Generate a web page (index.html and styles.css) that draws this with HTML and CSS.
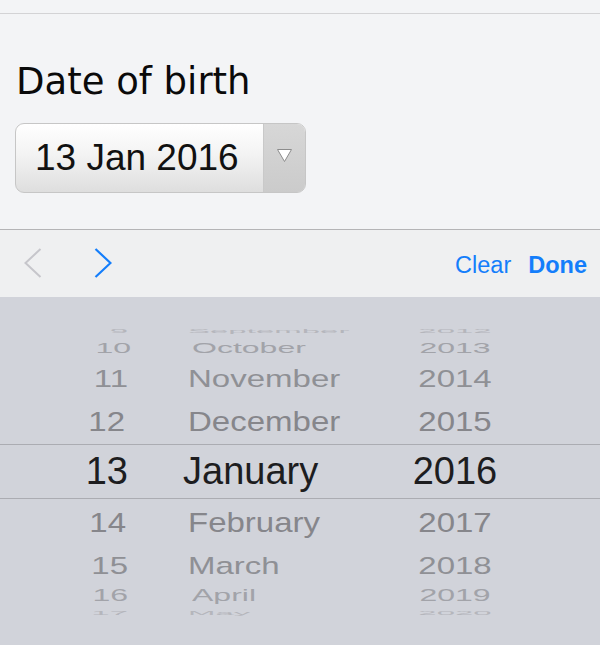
FILE: index.html
```html
<!DOCTYPE html>
<html>
<head>
<meta charset="utf-8">
<link rel="stylesheet" href="styles.css">
</head>
<body>
<div class="top">
  <div class="topstrip"></div>
  <div class="field">
    <div class="label">Date of birth</div>
    <div class="select">
      <div class="select-value">13 Jan 2016</div>
      <div class="select-arrow">
        <svg width="17" height="15" viewBox="0 0 17 15"><polygon points="1.5,1.5 15.5,1.5 8.5,13.5" fill="#ffffff" stroke="#8c8c8c" stroke-width="1"/></svg>
      </div>
    </div>
  </div>
</div>
<div class="toolbar">
  <svg class="chev" width="18" height="30" viewBox="0 0 18 30"><polyline points="16.5,1 1.5,15 16.5,29" fill="none" stroke="#c6c6cb" stroke-width="2"/></svg>
  <svg class="chev chev-next" width="18" height="30" viewBox="0 0 18 30"><polyline points="1.5,1 16.5,15 1.5,29" fill="none" stroke="#147efb" stroke-width="2.2"/></svg>
  <div class="spacer"></div>
  <span class="tb-btn">Clear</span>
  <span class="tb-btn tb-done">Done</span>
</div>
<div class="picker">
  <div class="row r4t"><span class="d">9</span><span class="m">September</span><span class="y">2012</span></div>
  <div class="row r3t"><span class="d">10</span><span class="m">October</span><span class="y">2013</span></div>
  <div class="row r2t"><span class="d">11</span><span class="m">November</span><span class="y">2014</span></div>
  <div class="row r1t"><span class="d">12</span><span class="m">December</span><span class="y">2015</span></div>
  <div class="row sel"><span class="d">13</span><span class="m">January</span><span class="y">2016</span></div>
  <div class="row r1b"><span class="d">14</span><span class="m">February</span><span class="y">2017</span></div>
  <div class="row r2b"><span class="d">15</span><span class="m">March</span><span class="y">2018</span></div>
  <div class="row r3b"><span class="d">16</span><span class="m">April</span><span class="y">2019</span></div>
  <div class="row r4b"><span class="d">17</span><span class="m">May</span><span class="y">2020</span></div>
</div>
</body>
</html>
```
FILE: styles.css
```css
html, body {
  margin: 0;
  padding: 0;
}
body {
  width: 600px;
  height: 645px;
  overflow: hidden;
  background: #d1d3da;
  font-family: "Liberation Sans", Arial, sans-serif;
}
.top {
  background: #f3f4f6;
  height: 229px;
}
.topstrip {
  height: 13px;
  border-bottom: 1px solid #d3d3d5;
}
.field {
  padding: 46px 0 0 16px;
}
.label {
  font-family: "DejaVu Sans", Verdana, sans-serif;
  font-size: 37px;
  line-height: 44px;
  color: #0a0a0a;
}
.select {
  margin-top: 19px;
  margin-left: -1px;
  width: 289px;
  height: 68px;
  border: 1px solid #c6c6c6;
  border-radius: 9px;
  display: flex;
  overflow: hidden;
  background: linear-gradient(#ffffff, #f3f3f3 45%, #dedede);
}
.select-value {
  flex: 1;
  display: flex;
  align-items: center;
  padding-left: 19px;
  font-size: 37px;
  color: #111;
}
.select-arrow {
  width: 42px;
  display: flex;
  align-items: center;
  justify-content: center;
  border-left: 1px solid #c9c9c9;
  background: linear-gradient(#d7d7d7, #cbcbcb);
  padding-bottom: 6px;
  box-sizing: border-box;
}
.toolbar {
  height: 67px;
  border-top: 1px solid #b4b4b6;
  background: #eff0f1;
  display: flex;
  align-items: center;
  padding: 0 13px 0 24px;
}
.chev {
  display: block;
  margin-top: -2px;
}
.chev-next {
  margin-left: 52px;
}
.spacer {
  flex: 1;
}
.tb-btn {
  font-size: 23.5px;
  color: #147efb;
  margin-top: 4px;
}
.tb-done {
  font-weight: bold;
  margin-left: 17px;
}
.picker {
  padding-top: 28px;
  color: #8a8a8f;
}
.row {
  display: grid;
  grid-template-columns: 128px 252px 150px;
  box-sizing: border-box;
  font-size: 33px;
}
.row span {
  display: block;
  white-space: nowrap;
}
.d {
  text-align: right;
}
.m {
  padding-left: 60px;
}
.y {
  text-align: center;
}
.r4t { height: 13px; line-height: 13px; color: #b5b6bc; }
.r4t span { transform: scaleY(0.14); }
.r3t { height: 20px; line-height: 20px; color: #a2a3a9; font-size: 32px; }
.r3t span { transform: scaleY(0.46); }
.r3t .m { padding-left: 64px; }
.r3t .d { transform: scaleY(0.46) translateX(3px); }
.r2t { height: 42px; line-height: 42px; color: #8f9095; }
.r2t span { transform: scaleY(0.74); }
.r1t { height: 44px; line-height: 44px; color: #86868b; }
.r1t span { transform: scaleY(0.82); }
.r1t .d { padding-right: 3px; }
.sel {
  height: 55px;
  line-height: 53px;
  border-top: 1px solid #abacb2;
  border-bottom: 1px solid #abacb2;
  color: #1d1d1f;
  font-size: 38px;
}
.sel .m { padding-left: 55px; }
.r1b { height: 48px; line-height: 48px; color: #86868b; }
.r1b span { transform: scaleY(0.82); }
.r1b .d { padding-right: 2px; }
.r2b { height: 38px; line-height: 38px; color: #8f9095; }
.r2b span { transform: scaleY(0.72); }
.r3b { height: 20px; line-height: 20px; color: #a2a3a9; font-size: 32px; }
.r3b span { transform: scaleY(0.5); }
.r3b .m { padding-left: 64px; }
.r4b { height: 16px; line-height: 16px; color: #b5b6bc; }
.r4b span { transform: scaleY(0.15); }
```
